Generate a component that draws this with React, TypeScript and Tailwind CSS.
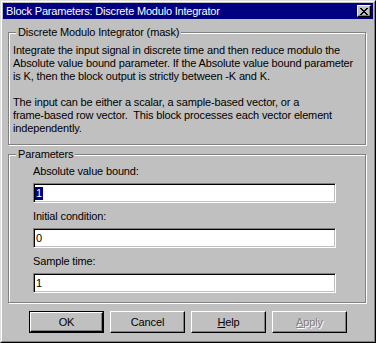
import React from 'react';

const raised =
  'border border-t-white border-l-white border-r-black border-b-black shadow-[inset_-1px_-1px_0_#808080]';

const sunken =
  'border border-t-[#808080] border-l-[#808080] border-r-white border-b-white shadow-[inset_1px_1px_0_#000,inset_-1px_-1px_0_#c0c0c0]';

const etched =
  'border border-[#808080] shadow-[inset_1px_1px_0_#fff,1px_1px_0_#fff]';

const GroupBox: React.FC<{ label: string; className?: string; children: React.ReactNode }> = ({
  label,
  className,
  children,
}) => (
  <div className={`relative ${etched} ${className ?? ''}`}>
    <span className="absolute left-[7px] top-[-7px] bg-[#c0c0c0] px-[2px] leading-[13px]">
      {label}
    </span>
    {children}
  </div>
);

const Field: React.FC<{ label: string; value: string; selected?: boolean }> = ({
  label,
  value,
  selected,
}) => (
  <div className="flex flex-col">
    <div className="h-[13px] leading-[13px]">{label}</div>
    <div className={`mt-[5px] h-[20px] w-[303px] bg-white ${sunken} flex items-center pl-[1px]`}>
      {selected ? (
        <span className="bg-[#000080] px-[1px] leading-[13px] text-white">{value}</span>
      ) : (
        <span className="px-[1px] leading-[13px]">{value}</span>
      )}
    </div>
  </div>
);

const Button: React.FC<{ children: React.ReactNode; isDefault?: boolean; disabled?: boolean }> = ({
  children,
  isDefault,
  disabled,
}) => {
  const face = (
    <div
      className={`flex h-full w-full items-center justify-center ${raised} ${
        disabled ? 'text-[#808080] [text-shadow:1px_1px_0_#fff]' : 'text-black'
      }`}
    >
      {children}
    </div>
  );
  return isDefault ? (
    <div className="h-[22px] w-[75px] border border-black">{face}</div>
  ) : (
    <div className="h-[22px] w-[75px]">{face}</div>
  );
};

const App: React.FC = () => {
  return (
    <div className="h-[343px] w-[376px] overflow-hidden border border-t-[#dfdfdf] border-l-[#dfdfdf] border-r-black border-b-black bg-[#c0c0c0] font-['Liberation_Sans',Arial,sans-serif] text-[11px] tracking-[-0.15px] text-black">
      <div className="flex h-full w-full flex-col border border-t-white border-l-white border-r-[#808080] border-b-[#808080] p-[1px]">
        {/* Caption */}
        <div className="flex h-[16px] shrink-0 items-center justify-between bg-[#000080] pl-[3px] pr-[2px]">
          <span className="text-[11px] leading-[16px] tracking-[-0.2px] text-white">
            Block Parameters: Discrete Modulo Integrator
          </span>
          <div className={`flex h-[12px] w-[14px] items-center justify-center bg-[#c0c0c0] ${raised}`}>
            <svg width="8" height="7" viewBox="0 0 8 7" shapeRendering="crispEdges">
              <path
                d="M0 0h2v1h-2zM6 0h2v1h-2zM1 1h2v1h-2zM5 1h2v1h-2zM2 2h4v1h-4zM3 3h2v1h-2zM2 4h4v1h-4zM1 5h2v1h-2zM5 5h2v1h-2zM0 6h2v1h-2zM6 6h2v1h-2z"
                fill="#000"
              />
            </svg>
          </div>
        </div>

        <div className="flex flex-col px-[5px]">
          {/* Description */}
          <GroupBox label="Discrete Modulo Integrator (mask)" className="mt-[13px] w-[358px]">
            <p className="pl-[4px] pt-[11px] pb-[9px] leading-[13px]">
              Integrate the input signal in discrete time and then reduce modulo the
              <br />
              Absolute value bound parameter. If the Absolute value bound parameter
              <br />
              is K, then the block output is strictly between -K and K.
              <br />
              <br />
              The input can be either a scalar, a sample-based vector, or a
              <br />
              frame-based row vector.&nbsp; This block processes each vector element
              <br />
              independently.
            </p>
          </GroupBox>

          {/* Parameters */}
          <GroupBox label="Parameters" className="mt-[9px] w-[358px]">
            <div className="flex flex-col gap-[7px] pl-[24px] pt-[10px] pb-[9px]">
              <Field label="Absolute value bound:" value="1" selected />
              <Field label="Initial condition:" value="0" />
              <Field label="Sample time:" value="1" />
            </div>
          </GroupBox>

          {/* Buttons */}
          <div className="mt-[8px] flex gap-[6px] pl-[21px]">
            <Button isDefault>OK</Button>
            <Button>Cancel</Button>
            <Button>
              <span>
                <span className="underline">H</span>elp
              </span>
            </Button>
            <Button disabled>
              <span>
                <span className="underline">A</span>pply
              </span>
            </Button>
          </div>
        </div>
      </div>
    </div>
  );
};

export default App;
